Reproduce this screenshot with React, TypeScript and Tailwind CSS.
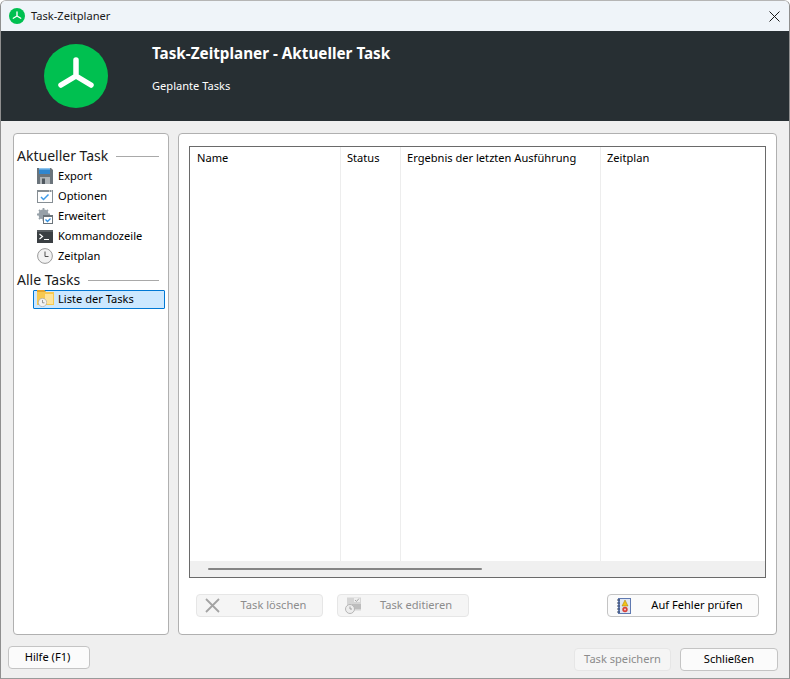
import React from 'react';

const font = { fontFamily: '"Noto Sans", sans-serif' };

const Logo: React.FC<{ size: number }> = ({ size }) => (
  <svg width={size} height={size} viewBox="0 0 64 64">
    <circle cx="32" cy="32" r="32" fill="#00c050" />
    <path d="M32 16V32M32 32L17 41M32 32L47 41" stroke="#fff" strokeWidth="5.5" strokeLinecap="round" strokeLinejoin="round" fill="none" />
  </svg>
);

const ExportIcon = () => (
  <svg width="16" height="16" viewBox="0 0 16 16">
    <path d="M0 0H14L16 2V16H0Z" fill="#6b747b" />
    <path d="M2 0H13V6H2Z" fill="#2f86cf" />
    <path d="M2 0H13V1.5H2Z" fill="#8cc4ee" />
    <path d="M3 9H13V16H3Z" fill="#aeb4b8" />
    <path d="M5 10.5H8V16H5Z" fill="#4f585f" />
  </svg>
);

const OptionsIcon = () => (
  <svg width="16" height="13" viewBox="0 0 16 13">
    <rect x="0.5" y="0.5" width="15" height="12" fill="#fff" stroke="#868e94" />
    <path d="M0 0H16V2H0Z" fill="#868e94" />
    <path d="M12 1H13M14 1H15" stroke="#fff" />
    <path d="M4 7L6.5 9.5L11.5 4.5" stroke="#3f9be8" strokeWidth="1.5" fill="none" />
  </svg>
);

const AdvancedIcon = () => (
  <svg width="16" height="16" viewBox="0 0 16 16">
    <circle cx="6.5" cy="6.5" r="3.6" fill="none" stroke="#97a1a9" strokeWidth="3" />
    <path d="M6.5 0V13M0 6.5H13M2 2L11 11M11 2L2 11" stroke="#97a1a9" strokeWidth="1.8" />
    <rect x="6.5" y="7.5" width="9" height="8" fill="#fff" stroke="#6b747b" />
    <path d="M6 7H16V9H6Z" fill="#6b747b" />
    <path d="M8.5 11.5L10.5 13.5L13.5 10.5" stroke="#2f8fe0" strokeWidth="1.3" fill="none" />
  </svg>
);

const ConsoleIcon = () => (
  <svg width="16" height="13" viewBox="0 0 16 13">
    <rect width="16" height="13" fill="#3a3f43" />
    <path d="M0 0H16V2H0Z" fill="#575c60" />
    <path d="M2.5 4L5.5 6.5L2.5 9" stroke="#fff" strokeWidth="1.2" fill="none" />
    <path d="M7 9.5H12" stroke="#fff" strokeWidth="1.2" />
  </svg>
);

const ClockIcon: React.FC<{ size?: number }> = ({ size = 16 }) => (
  <svg width={size} height={size} viewBox="0 0 16 16">
    <circle cx="8" cy="8" r="7.4" fill="#f2f2f2" stroke="#9a9a9a" />
    <path d="M8 3.5V8.5H11.5" stroke="#505050" strokeWidth="1" fill="none" />
  </svg>
);

const FolderClockIcon = () => (
  <span className="relative block w-[17px] h-[16px] -mt-[3px]">
    <svg width="17" height="15" viewBox="0 0 17 15">
      <path d="M0 0H7L9 2H17V15H0Z" fill="#f7c94f" />
      <path d="M0 0H7L9 2H0Z" fill="#e3a42f" />
      <path d="M8 4H16V14H8Z" fill="#fde39a" />
    </svg>
    <span className="absolute left-[1px] top-[8px]">
      <ClockIcon size={9} />
    </span>
  </span>
);

const TreeItem: React.FC<{ icon: React.ReactNode; label: string; selected?: boolean }> = ({ icon, label, selected }) => (
  <div className={`flex items-center ml-[16px] w-[132px] ${selected ? 'h-[19px] bg-[#cce8ff] border border-[#0078d4] rounded-[1px]' : 'h-[20px]'}`}>
    <span className={`flex items-center justify-center w-[17px] ${selected ? 'ml-[3px]' : 'ml-[3px]'}`}>{icon}</span>
    <span className={`text-[11.1px] text-black ${selected ? 'ml-[4px]' : 'ml-[5px]'}`}>{label}</span>
  </div>
);

const GroupTitle: React.FC<{ label: string }> = ({ label }) => (
  <div className="flex items-center h-[20px] pr-[9px]">
    <span className="text-[14px] leading-[18px] text-[#1a1a1a] -mt-[1px]">{label}</span>
    <span className="flex-1 h-px bg-[#a9a9a9] ml-[8px]" />
  </div>
);

const Button: React.FC<{ className: string; disabled?: boolean; children: React.ReactNode }> = ({ className, disabled, children }) => (
  <div
    className={`flex items-center justify-center rounded-[4px] border text-[11.1px] ${
      disabled ? 'bg-[#f5f5f5] border-[#e6e6e6] text-[#8c8c8c]' : 'bg-[#fbfbfb] border-[#c4c4c4] text-black'
    } ${className}`}
  >
    {children}
  </div>
);

const columns = [
  { name: 'Name', width: 'w-[151px] border-r', pad: 'pl-[7px]' },
  { name: 'Status', width: 'w-[60px] border-r', pad: 'pl-[6px]' },
  { name: 'Ergebnis der letzten Ausführung', width: 'w-[200px] border-r', pad: 'pl-[6px]' },
  { name: 'Zeitplan', width: 'flex-1', pad: 'pl-[6px]' },
];

const App: React.FC = () => {
  return (
    <div style={font} className="w-[790px] h-[679px] flex flex-col bg-[#efefef] border border-t-[#b5b5b5] border-x-[#8f8f8f] border-b-[#9a9a9a] rounded-t-[6px] overflow-hidden">
      {/* Title bar */}
      <div className="h-[30px] bg-[#eff4f9] flex items-center pl-[8px] pr-[9px] shrink-0">
        <Logo size={16} />
        <span className="ml-[6px] text-[11.1px] text-[#1a1a1a]">Task-Zeitplaner</span>
        <svg className="ml-auto" width="11" height="11" viewBox="0 0 11 11">
          <path d="M0.5 0.5L10.5 10.5M10.5 0.5L0.5 10.5" stroke="#1a1a1a" strokeWidth="1" />
        </svg>
      </div>

      {/* Header */}
      <div className="h-[90px] bg-[#272f33] flex shrink-0">
        <div className="ml-[43px] mt-[13px]">
          <Logo size={64} />
        </div>
        <div className="ml-[44px] text-white">
          <div className="mt-[11px] text-[15.25px] font-bold leading-[22px]">Task-Zeitplaner - Aktueller Task</div>
          <div className="mt-[13px] text-[11.1px] leading-[18px]">Geplante Tasks</div>
        </div>
      </div>

      {/* Body */}
      <div className="flex gap-[9px] pt-[12px] pl-[12px] pr-[12px] shrink-0">
        <div className="w-[156px] h-[502px] bg-white border border-[#b0b0b0] rounded-[4px] pt-[12px] pl-[3px]">
          <GroupTitle label="Aktueller Task" />
          <TreeItem icon={<ExportIcon />} label="Export" />
          <TreeItem icon={<OptionsIcon />} label="Optionen" />
          <TreeItem icon={<AdvancedIcon />} label="Erweitert" />
          <TreeItem icon={<ConsoleIcon />} label="Kommandozeile" />
          <TreeItem icon={<ClockIcon />} label="Zeitplan" />
          <div className="mt-[4px]">
            <GroupTitle label="Alle Tasks" />
          </div>
          <TreeItem icon={<FolderClockIcon />} label="Liste der Tasks" selected />
        </div>

        <div className="w-[599px] h-[502px] bg-white border border-[#b0b0b0] rounded-[4px] pt-[12px] px-[10px]">
          <div className="h-[432px] border border-[#6a6a6a] flex flex-col">
            <div className="flex-1 flex">
              {columns.map((c) => (
                <div key={c.name} className={`${c.width} border-[#ededed] ${c.pad} pt-[2px] text-[11.1px] leading-[18px] text-black`}>
                  {c.name}
                </div>
              ))}
            </div>
            <div className="h-[16px] bg-[#f0f0f0] pl-[18px] pt-[7px]">
              <div className="w-[274px] h-[2px] bg-[#858585] rounded-full" />
            </div>
          </div>

          <div className="flex mt-[16px] pl-[7px] pr-[7px]">
            <Button disabled className="w-[127px] h-[23px] relative pl-[28px]">
              <svg className="absolute left-[8px] top-[3px]" width="15" height="15" viewBox="0 0 15 15">
                <path d="M1 1L14 14M14 1L1 14" stroke="#a3a3a3" strokeWidth="1.8" />
              </svg>
              Task löschen
            </Button>
            <Button disabled className="w-[132px] h-[23px] ml-[14px] relative pl-[26px]">
              <svg className="absolute left-[7px] top-[2px]" width="17" height="17" viewBox="0 0 17 17">
                <rect x="2" y="0.5" width="14" height="13" fill="#d5d5d5" />
                <rect x="9" y="1" width="6" height="4" fill="#eeeeee" />
                <path d="M10 3L11.5 4.5L14 1.5" stroke="#a8a8a8" fill="none" />
                <rect x="7" y="7" width="9" height="5" fill="#bdbdbd" />
                <circle cx="5" cy="12" r="4.5" fill="#ededed" stroke="#b5b5b5" />
                <path d="M5 9.5V12H7" stroke="#a0a0a0" fill="none" />
              </svg>
              Task editieren
            </Button>
            <Button className="w-[152px] h-[23px] ml-auto relative pl-[28px]">
              <svg className="absolute left-[9px] top-[3px]" width="15" height="16" viewBox="0 0 15 16">
                <rect x="1" y="0" width="13" height="16" fill="#5f79b0" />
                <rect x="3" y="1" width="10" height="14" fill="#dfe6f3" />
                <path d="M0 2H3M0 5H3M0 8H3M0 11H3M0 14H3" stroke="#3c4a66" />
                <path d="M8 2L11 8H5Z" fill="#f2c21a" stroke="#a37a00" strokeWidth="0.5" />
                <circle cx="8" cy="11.5" r="2.7" fill="#d9423a" />
                <circle cx="8" cy="11.5" r="1" fill="#f5d0cd" />
              </svg>
              Auf Fehler prüfen
            </Button>
          </div>
        </div>
      </div>

      {/* Footer */}
      <div className="flex items-start pl-[7px] pr-[11px] mt-[11px]">
        <Button className="w-[82px] h-[23px] pr-[3px]">Hilfe (F1)</Button>
        <Button disabled className="w-[97px] h-[23px] ml-auto mt-[2px]">Task speichern</Button>
        <Button className="w-[98px] h-[23px] ml-[9px] mt-[2px]">Schließen</Button>
      </div>
    </div>
  );
};

export default App;
